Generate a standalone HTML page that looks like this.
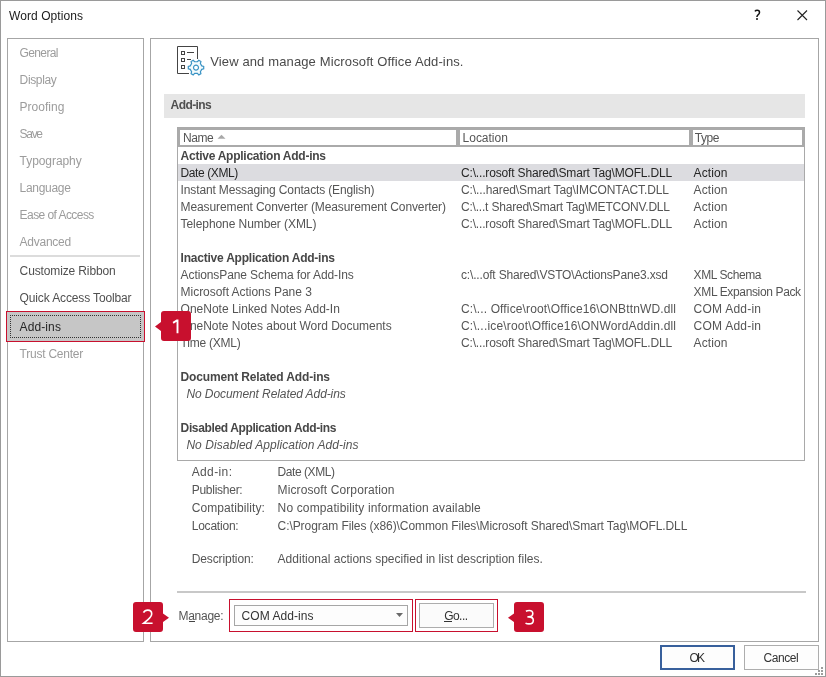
<!DOCTYPE html>
<html><head><meta charset="utf-8"><style>
*{margin:0;padding:0;box-sizing:border-box}
html,body{width:826px;height:677px;overflow:hidden;background:#fff}
body{position:relative;font-family:"Liberation Sans",sans-serif}
.t{position:absolute;white-space:pre}
body{will-change:transform}
.b{position:absolute}
</style></head><body>

<div class="b" style="left:0;top:0;width:826px;height:677px;border:1px solid #9a9a9a"></div>
<div class="b" style="left:7px;top:38px;width:137px;height:604px;border:1px solid #a6a6a6"></div>
<div class="b" style="left:150px;top:38px;width:669px;height:604px;border:1px solid #a6a6a6"></div>
<div class="b" style="left:10px;top:255px;width:130px;height:2px;background:#dcdcdc"></div>
<!-- add-ins selected -->
<div class="b" style="left:6px;top:311px;width:139px;height:31px;border:1px solid #c8102e;background:#c6c6c6"></div>
<div class="b" style="left:10px;top:315px;width:131px;height:23px;border:1px dotted #333"></div>
<!-- section bar -->
<div class="b" style="left:164px;top:94px;width:641px;height:24px;background:#e6e6e6"></div>
<!-- list -->
<div class="b" style="left:177px;top:127px;width:628px;height:334px;border:1px solid #a9a9a9"></div>
<div class="b" style="left:178px;top:128px;width:280px;height:19px;border:2px solid #aaa"></div>
<div class="b" style="left:458px;top:128px;width:233px;height:19px;border:2px solid #aaa"></div>
<div class="b" style="left:691px;top:128px;width:113px;height:19px;border:2px solid #aaa"></div>
<div class="b" style="left:178px;top:164px;width:626px;height:17px;background:#dcdce0"></div>
<svg class="b" style="left:0;top:0" width="826" height="677">
  <polygon points="217.5,138.8 221.5,134.8 225.5,138.8" fill="#a8a8a8"/>
</svg>
<!-- separator -->
<div class="b" style="left:177px;top:591px;width:629px;height:2px;background:#c8c8c8"></div>
<!-- manage -->
<div class="b" style="left:189px;top:621px;width:6px;height:1px;background:#444"></div>
<div class="b" style="left:229px;top:599px;width:184px;height:33px;border:1px solid #c8102e"></div>
<div class="b" style="left:234px;top:605px;width:174px;height:21px;border:1px solid #a6a6a6;background:#fdfdfd"></div>
<svg class="b" style="left:0;top:0" width="826" height="677">
  <polygon points="396,613 403,613 399.5,617" fill="#6a6a6a"/>
</svg>
<div class="b" style="left:415px;top:599px;width:83px;height:33px;border:1px solid #c8102e"></div>
<div class="b" style="left:419px;top:603px;width:75px;height:25px;border:1px solid #adadad;background:#fbfbfb"></div>
<div class="b" style="left:444px;top:621px;width:8px;height:1px;background:#333"></div>
<!-- OK/Cancel -->
<div class="b" style="left:660px;top:645px;width:75px;height:25px;border:2px solid #38609c;background:#fdfdfd"></div>
<div class="b" style="left:744px;top:645px;width:75px;height:25px;border:1px solid #adadad;background:#fdfdfd"></div>
<div class="b" style="left:821px;top:667px;width:2px;height:2px;background:#9c9c9c"></div><div class="b" style="left:818px;top:670px;width:2px;height:2px;background:#9c9c9c"></div><div class="b" style="left:821px;top:670px;width:2px;height:2px;background:#9c9c9c"></div><div class="b" style="left:815px;top:673px;width:2px;height:2px;background:#9c9c9c"></div><div class="b" style="left:818px;top:673px;width:2px;height:2px;background:#9c9c9c"></div><div class="b" style="left:821px;top:673px;width:2px;height:2px;background:#9c9c9c"></div>
<!-- title icons -->
<svg class="b" style="left:0;top:0" width="826" height="677">
  <path d="M797.5,10.5 L807,20 M807,10.5 L797.5,20" stroke="#222" stroke-width="1.1" fill="none"/>
  <path d="M754.9,11.4 C755.5,10.6 756.3,10.3 757.2,10.3 C758.7,10.3 759.5,11.2 759.5,12.4 C759.5,13.6 758.7,14.3 757.9,15 C757.2,15.7 756.9,16.2 756.9,17.1" stroke="#111" stroke-width="1.5" fill="none"/>
  <circle cx="757" cy="19" r="1" fill="#111"/>
  <!-- doc icon -->
  <path d="M177.5,73.5 V46.5 H197.5 V59 M177.5,73.5 H189" stroke="#444" stroke-width="1" fill="none"/>
  <rect x="181.5" y="51.5" width="3" height="3" stroke="#444" fill="none"/>
  <rect x="181.5" y="58.5" width="3" height="3" stroke="#444" fill="none"/>
  <rect x="181.5" y="65.5" width="3" height="3" stroke="#444" fill="none"/>
  <path d="M187,52.5 H194 M187,59.5 H191" stroke="#444" stroke-width="1"/>
  <!-- gear -->
  <g transform="translate(196,67.6)" stroke="#3a93c4" stroke-width="1.2" fill="#f4fbfd">
    <path d="M5.74,-1.73 L7.70,-1.22 L7.70,1.22 L5.74,1.73 L4.37,4.11 L4.91,6.06 L2.80,7.28 L1.37,5.84 L-1.37,5.84 L-2.80,7.28 L-4.91,6.06 L-4.37,4.11 L-5.74,1.73 L-7.70,1.22 L-7.70,-1.22 L-5.74,-1.73 L-4.37,-4.11 L-4.91,-6.06 L-2.80,-7.28 L-1.37,-5.84 L1.37,-5.84 L2.80,-7.28 L4.91,-6.06 L4.37,-4.11 Z M2.5,0 A2.5,2.5 0 1,0 -2.5,0 A2.5,2.5 0 1,0 2.5,0 Z"/>
  </g>
</svg>

<div class="t" style="left:9.10px;top:9px;font-size:12px;line-height:14px;color:#1b1b1b;font-weight:normal;font-style:normal;letter-spacing:0.060px">Word Options</div>
<div class="t" style="left:19.60px;top:46px;font-size:12px;line-height:14px;color:#9c9c9c;font-weight:normal;font-style:normal;letter-spacing:-0.637px">General</div>
<div class="t" style="left:19.60px;top:73px;font-size:12px;line-height:14px;color:#9c9c9c;font-weight:normal;font-style:normal;letter-spacing:-0.360px">Display</div>
<div class="t" style="left:19.60px;top:100px;font-size:12px;line-height:14px;color:#9c9c9c;font-weight:normal;font-style:normal;letter-spacing:0.014px">Proofing</div>
<div class="t" style="left:19.60px;top:127px;font-size:12px;line-height:14px;color:#9c9c9c;font-weight:normal;font-style:normal;letter-spacing:-1.320px">Save</div>
<div class="t" style="left:19.60px;top:154px;font-size:12px;line-height:14px;color:#9c9c9c;font-weight:normal;font-style:normal;letter-spacing:-0.067px">Typography</div>
<div class="t" style="left:19.60px;top:181px;font-size:12px;line-height:14px;color:#9c9c9c;font-weight:normal;font-style:normal;letter-spacing:-0.300px">Language</div>
<div class="t" style="left:19.60px;top:208px;font-size:12px;line-height:14px;color:#9c9c9c;font-weight:normal;font-style:normal;letter-spacing:-0.563px">Ease of Access</div>
<div class="t" style="left:19.60px;top:235px;font-size:12px;line-height:14px;color:#9c9c9c;font-weight:normal;font-style:normal;letter-spacing:-0.257px">Advanced</div>
<div class="t" style="left:19.60px;top:264px;font-size:12px;line-height:14px;color:#505050;font-weight:normal;font-style:normal;letter-spacing:-0.129px">Customize Ribbon</div>
<div class="t" style="left:19.60px;top:291px;font-size:12px;line-height:14px;color:#505050;font-weight:normal;font-style:normal;letter-spacing:-0.131px">Quick Access Toolbar</div>
<div class="t" style="left:19.60px;top:320px;font-size:12px;line-height:14px;color:#262626;font-weight:normal;font-style:normal;letter-spacing:0.103px">Add-ins</div>
<div class="t" style="left:19.60px;top:347px;font-size:12px;line-height:14px;color:#9c9c9c;font-weight:normal;font-style:normal;letter-spacing:-0.240px">Trust Center</div>
<div class="t" style="left:210.20px;top:54px;font-size:13px;line-height:15px;color:#4a4a4a;font-weight:normal;font-style:normal;letter-spacing:0.130px">View and manage Microsoft Office Add-ins.</div>
<div class="t" style="left:170.60px;top:98px;font-size:12px;line-height:14px;color:#505050;font-weight:bold;font-style:normal;letter-spacing:-0.590px">Add-ins</div>
<div class="t" style="left:183.00px;top:131px;font-size:12px;line-height:14px;color:#555;font-weight:normal;font-style:normal;letter-spacing:-0.480px">Name</div>
<div class="t" style="left:462.60px;top:131px;font-size:12px;line-height:14px;color:#555;font-weight:normal;font-style:normal;letter-spacing:-0.023px">Location</div>
<div class="t" style="left:694.80px;top:131px;font-size:12px;line-height:14px;color:#555;font-weight:normal;font-style:normal;letter-spacing:-0.480px">Type</div>
<div class="t" style="left:180.60px;top:149px;font-size:12px;line-height:14px;color:#474747;font-weight:bold;font-style:normal;letter-spacing:-0.256px">Active Application Add-ins</div>
<div class="t" style="left:180.60px;top:166px;font-size:12px;line-height:14px;color:#262626;font-weight:normal;font-style:normal;letter-spacing:-0.409px">Date (XML)</div>
<div class="t" style="left:461.00px;top:166px;font-size:12px;line-height:14px;color:#262626;font-weight:normal;font-style:normal;letter-spacing:-0.162px">C:\...rosoft Shared\Smart Tag\MOFL.DLL</div>
<div class="t" style="left:693.60px;top:166px;font-size:12px;line-height:14px;color:#262626;font-weight:normal;font-style:normal;letter-spacing:0.088px">Action</div>
<div class="t" style="left:180.60px;top:183px;font-size:12px;line-height:14px;color:#555;font-weight:normal;font-style:normal;letter-spacing:-0.139px">Instant Messaging Contacts (English)</div>
<div class="t" style="left:461.00px;top:183px;font-size:12px;line-height:14px;color:#555;font-weight:normal;font-style:normal;letter-spacing:-0.106px">C:\...hared\Smart Tag\IMCONTACT.DLL</div>
<div class="t" style="left:693.60px;top:183px;font-size:12px;line-height:14px;color:#555;font-weight:normal;font-style:normal;letter-spacing:0.088px">Action</div>
<div class="t" style="left:180.60px;top:200px;font-size:12px;line-height:14px;color:#555;font-weight:normal;font-style:normal;letter-spacing:-0.107px">Measurement Converter (Measurement Converter)</div>
<div class="t" style="left:461.00px;top:200px;font-size:12px;line-height:14px;color:#555;font-weight:normal;font-style:normal;letter-spacing:-0.202px">C:\...t Shared\Smart Tag\METCONV.DLL</div>
<div class="t" style="left:693.60px;top:200px;font-size:12px;line-height:14px;color:#555;font-weight:normal;font-style:normal;letter-spacing:0.088px">Action</div>
<div class="t" style="left:180.60px;top:217px;font-size:12px;line-height:14px;color:#555;font-weight:normal;font-style:normal;letter-spacing:-0.076px">Telephone Number (XML)</div>
<div class="t" style="left:461.00px;top:217px;font-size:12px;line-height:14px;color:#555;font-weight:normal;font-style:normal;letter-spacing:-0.162px">C:\...rosoft Shared\Smart Tag\MOFL.DLL</div>
<div class="t" style="left:693.60px;top:217px;font-size:12px;line-height:14px;color:#555;font-weight:normal;font-style:normal;letter-spacing:0.088px">Action</div>
<div class="t" style="left:180.60px;top:251px;font-size:12px;line-height:14px;color:#474747;font-weight:bold;font-style:normal;letter-spacing:-0.224px">Inactive Application Add-ins</div>
<div class="t" style="left:180.60px;top:268px;font-size:12px;line-height:14px;color:#555;font-weight:normal;font-style:normal;letter-spacing:-0.100px">ActionsPane Schema for Add-Ins</div>
<div class="t" style="left:461.00px;top:268px;font-size:12px;line-height:14px;color:#555;font-weight:normal;font-style:normal;letter-spacing:-0.169px">c:\...oft Shared\VSTO\ActionsPane3.xsd</div>
<div class="t" style="left:693.60px;top:268px;font-size:12px;line-height:14px;color:#555;font-weight:normal;font-style:normal;letter-spacing:-0.416px">XML Schema</div>
<div class="t" style="left:180.60px;top:285px;font-size:12px;line-height:14px;color:#555;font-weight:normal;font-style:normal;letter-spacing:-0.037px">Microsoft Actions Pane 3</div>
<div class="t" style="left:693.60px;top:285px;font-size:12px;line-height:14px;color:#555;font-weight:normal;font-style:normal;letter-spacing:-0.359px">XML Expansion Pack</div>
<div class="t" style="left:180.60px;top:302px;font-size:12px;line-height:14px;color:#555;font-weight:normal;font-style:normal;letter-spacing:-0.008px">OneNote Linked Notes Add-In</div>
<div class="t" style="left:461.00px;top:302px;font-size:12px;line-height:14px;color:#555;font-weight:normal;font-style:normal;letter-spacing:0.137px">C:\... Office\root\Office16\ONBttnWD.dll</div>
<div class="t" style="left:693.60px;top:302px;font-size:12px;line-height:14px;color:#555;font-weight:normal;font-style:normal;letter-spacing:0.229px">COM Add-in</div>
<div class="t" style="left:180.60px;top:319px;font-size:12px;line-height:14px;color:#555;font-weight:normal;font-style:normal;letter-spacing:-0.025px">OneNote Notes about Word Documents</div>
<div class="t" style="left:461.00px;top:319px;font-size:12px;line-height:14px;color:#555;font-weight:normal;font-style:normal;letter-spacing:0.176px">C:\...ice\root\Office16\ONWordAddin.dll</div>
<div class="t" style="left:693.60px;top:319px;font-size:12px;line-height:14px;color:#555;font-weight:normal;font-style:normal;letter-spacing:0.229px">COM Add-in</div>
<div class="t" style="left:180.60px;top:336px;font-size:12px;line-height:14px;color:#555;font-weight:normal;font-style:normal;letter-spacing:-0.236px">Time (XML)</div>
<div class="t" style="left:461.00px;top:336px;font-size:12px;line-height:14px;color:#555;font-weight:normal;font-style:normal;letter-spacing:-0.162px">C:\...rosoft Shared\Smart Tag\MOFL.DLL</div>
<div class="t" style="left:693.60px;top:336px;font-size:12px;line-height:14px;color:#555;font-weight:normal;font-style:normal;letter-spacing:0.088px">Action</div>
<div class="t" style="left:180.60px;top:370px;font-size:12px;line-height:14px;color:#474747;font-weight:bold;font-style:normal;letter-spacing:-0.151px">Document Related Add-ins</div>
<div class="t" style="left:186.40px;top:387px;font-size:12px;line-height:14px;color:#555;font-weight:normal;font-style:italic;letter-spacing:-0.086px">No Document Related Add-ins</div>
<div class="t" style="left:180.60px;top:421px;font-size:12px;line-height:14px;color:#474747;font-weight:bold;font-style:normal;letter-spacing:-0.370px">Disabled Application Add-ins</div>
<div class="t" style="left:186.40px;top:438px;font-size:12px;line-height:14px;color:#555;font-weight:normal;font-style:italic;letter-spacing:0.053px">No Disabled Application Add-ins</div>
<div class="t" style="left:191.70px;top:465px;font-size:12px;line-height:14px;color:#555;font-weight:normal;font-style:normal;letter-spacing:0.377px">Add-in:</div>
<div class="t" style="left:277.60px;top:465px;font-size:12px;line-height:14px;color:#555;font-weight:normal;font-style:normal;letter-spacing:-0.442px">Date (XML)</div>
<div class="t" style="left:191.70px;top:483px;font-size:12px;line-height:14px;color:#555;font-weight:normal;font-style:normal;letter-spacing:-0.260px">Publisher:</div>
<div class="t" style="left:277.60px;top:483px;font-size:12px;line-height:14px;color:#555;font-weight:normal;font-style:normal;letter-spacing:0.109px">Microsoft Corporation</div>
<div class="t" style="left:191.70px;top:501px;font-size:12px;line-height:14px;color:#555;font-weight:normal;font-style:normal;letter-spacing:0.092px">Compatibility:</div>
<div class="t" style="left:277.60px;top:501px;font-size:12px;line-height:14px;color:#555;font-weight:normal;font-style:normal;letter-spacing:0.137px">No compatibility information available</div>
<div class="t" style="left:191.70px;top:519px;font-size:12px;line-height:14px;color:#555;font-weight:normal;font-style:normal;letter-spacing:-0.215px">Location:</div>
<div class="t" style="left:277.60px;top:519px;font-size:12px;line-height:14px;color:#555;font-weight:normal;font-style:normal;letter-spacing:-0.078px">C:\Program Files (x86)\Common Files\Microsoft Shared\Smart Tag\MOFL.DLL</div>
<div class="t" style="left:191.70px;top:552px;font-size:12px;line-height:14px;color:#555;font-weight:normal;font-style:normal;letter-spacing:-0.105px">Description:</div>
<div class="t" style="left:277.60px;top:552px;font-size:12px;line-height:14px;color:#555;font-weight:normal;font-style:normal;letter-spacing:0.008px">Additional actions specified in list description files.</div>
<div class="t" style="left:178.50px;top:609px;font-size:12px;line-height:14px;color:#555;font-weight:normal;font-style:normal;letter-spacing:-0.280px">Manage:</div>
<div class="t" style="left:241.60px;top:609px;font-size:12px;line-height:14px;color:#333;font-weight:normal;font-style:normal;letter-spacing:0.056px">COM Add-ins</div>
<div class="t" style="left:444.20px;top:609px;font-size:12px;line-height:14px;color:#333;font-weight:normal;font-style:normal;letter-spacing:-0.545px">Go...</div>
<div class="t" style="left:689.40px;top:651px;font-size:12px;line-height:14px;color:#333;font-weight:normal;font-style:normal;letter-spacing:-1.740px">OK</div>
<div class="t" style="left:763.60px;top:651px;font-size:12px;line-height:14px;color:#333;font-weight:normal;font-style:normal;letter-spacing:-0.456px">Cancel</div>
<svg class="b" style="left:0;top:0" width="826" height="677">
  <path d="M164,311 H188 Q191,311 191,314 V338 Q191,341 188,341 H164 Q161,341 161,338 V331 L155,326.5 L161,322 V314 Q161,311 164,311 Z" fill="#c8102e"/>
  <path d="M136,602 H160 Q163,602 163,605 V613.5 L169,617.7 L163,622 V629 Q163,632 160,632 H136 Q133,632 133,629 V605 Q133,602 136,602 Z" fill="#c8102e"/>
  <path d="M517,602 H541 Q544,602 544,605 V629 Q544,632 541,632 H517 Q514,632 514,629 V622 L508,617.7 L514,613.5 V605 Q514,602 517,602 Z" fill="#c8102e"/>
  <g stroke="#fff" fill="none" stroke-width="1.6">
    <path d="M177.5,319.6 V333.2 M177.5,320 L173.1,322.9" stroke-width="1.9"/>
    <path d="M143.5,612.6 C144.4,610.8 146.1,610.1 147.8,610.1 C150.3,610.1 151.7,611.6 151.7,613.8 C151.7,616 150.3,617.6 148,619.6 L143.6,623.3 H152.6"/>
    <path d="M525.9,611.2 C526.9,610.7 528,610.5 529.2,610.5 C531.5,610.5 532.8,611.7 532.8,613.6 C532.8,615.6 531.2,616.9 528.6,616.9 H527.4 M528.6,616.9 C531.6,616.9 533.3,618.4 533.3,620.5 C533.3,622.7 531.5,623.9 529,623.9 C527.6,623.9 526.4,623.6 525.5,623.1"/>
  </g>
</svg>

</body></html>
